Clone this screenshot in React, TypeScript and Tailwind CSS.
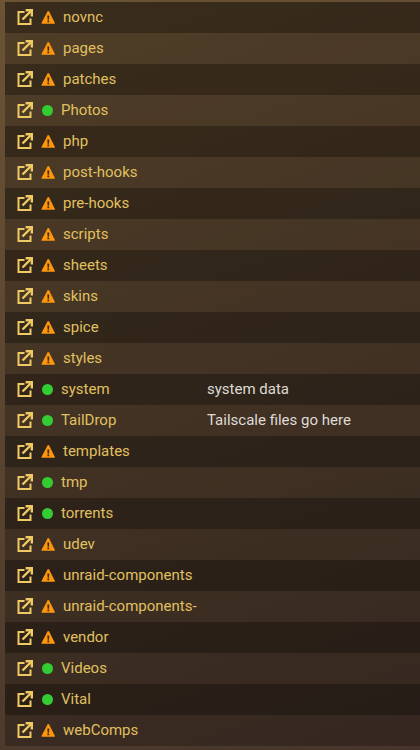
import React from "react";

type Share = {
  name: string;
  safe?: boolean;
  comment?: string;
};

const shares: Share[] = [
  { name: "novnc" },
  { name: "pages" },
  { name: "patches" },
  { name: "Photos", safe: true },
  { name: "php" },
  { name: "post-hooks" },
  { name: "pre-hooks" },
  { name: "scripts" },
  { name: "sheets" },
  { name: "skins" },
  { name: "spice" },
  { name: "styles" },
  { name: "system", safe: true, comment: "system data" },
  { name: "TailDrop", safe: true, comment: "Tailscale files go here" },
  { name: "templates" },
  { name: "tmp", safe: true },
  { name: "torrents", safe: true },
  { name: "udev" },
  { name: "unraid-components" },
  { name: "unraid-components-" },
  { name: "vendor" },
  { name: "Videos", safe: true },
  { name: "Vital", safe: true },
  { name: "webComps" },
];

function ExternalIcon() {
  return (
    <svg viewBox="0 0 16 16" className="size-4 text-[#efc964]" fill="none" stroke="currentColor">
      <path strokeWidth="2" d="M7.500 3H1.500V15H13.500V9.500" />
      <path strokeWidth="2.400" d="M5.500 10.500 14.500 1.500" />
      <path strokeWidth="2.400" d="M8.600 1.200H14.800V7.400" />
    </svg>
  );
}

function WarningIcon() {
  return (
    <svg viewBox="0 0 14 13" className="w-3.5 h-[13px] text-[#ff960c]">
      <path
        fill="currentColor"
        d="M7.300 0c.4 0 .6.200.8.500l5.700 11.200c.3.600 0 1.100-.6 1.100H1.200c-.6 0-.9-.5-.6-1.100L6.500.5c.2-.3.400-.5.800-.5z"
      />
      <path fill="#3a2c1c" d="M6.300 4.500h2l-.3 4.200H6.600zM6.400 9.600h1.800v1.700H6.400z" />
    </svg>
  );
}

export default function App() {
  return (
    <div className="min-h-screen bg-linear-160 from-[#6b5334] to-[#47352b] pl-[5px] pt-0.5 pb-1 font-[Roboto,'Noto_Sans',sans-serif] text-[15px]">
      <table className="w-full table-fixed border-collapse bg-black/25">
        <tbody>
          {shares.map((share) => (
            <tr key={share.name} className="h-[31px] odd:bg-black/28">
              <td className="w-[202px] p-0 pl-3">
                <div className="flex items-center text-[#e0c060]">
                  <a href="#browse" aria-label={"Browse " + share.name} className="mr-2 pb-0.5">
                    <ExternalIcon />
                  </a>
                  <a href="#share" className="flex items-center whitespace-nowrap">
                    {share.safe ? (
                      <span className="ml-px mr-2 size-[11px] rounded-full bg-[#33cc33]" />
                    ) : (
                      <span className="mr-2">
                        <WarningIcon />
                      </span>
                    )}
                    {share.name}
                  </a>
                </div>
              </td>
              <td className="p-0 text-[#dedad5]">{share.comment}</td>
            </tr>
          ))}
        </tbody>
      </table>
    </div>
  );
}
